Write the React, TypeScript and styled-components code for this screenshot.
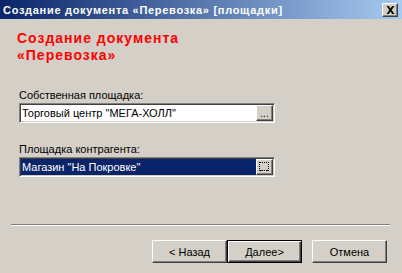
import React from "react";
import styled, { createGlobalStyle, css } from "styled-components";

const GlobalStyle = createGlobalStyle`
  html, body { margin: 0; padding: 0; background: #d4d0c8; }
  body { font-family: Tahoma, "Liberation Sans", Arial, sans-serif; }
`;

const Window = styled.div`
  width: 402px;
  height: 273px;
  background: #d4d0c8;
  display: flex;
  flex-direction: column;
  font-size: 11px;
  color: #000;
  overflow: hidden;
`;

const TitleBar = styled.div`
  height: 19px;
  flex: none;
  display: flex;
  align-items: center;
  justify-content: space-between;
  padding: 0 4px 0 3px;
  background: linear-gradient(to right, #0a246a, #a6caf0);
`;

const TitleText = styled.span`
  color: #fff;
  font-weight: bold;
  font-size: 11px;
  letter-spacing: 0.7px;
  white-space: nowrap;
`;

const raised = css`
  border: 1px solid;
  border-color: #fff #404040 #404040 #fff;
  box-shadow: inset -1px -1px #808080, inset 1px 1px #d4d0c8;
`;

const CloseButton = styled.div`
  ${raised};
  box-sizing: border-box;
  width: 16px;
  height: 14px;
  display: flex;
  align-items: center;
  justify-content: center;
  background: #d4d0c8;
`;

const Body = styled.div`
  flex: 1;
  display: flex;
  flex-direction: column;
  padding: 11px 0 0 19px;
`;

const Heading = styled.h1`
  margin: 0 0 25px -2px;
  color: #ff0000;
  font-size: 14px;
  line-height: 17px;
  letter-spacing: 1px;
  font-weight: bold;
`;

const FieldGroup = styled.div`
  display: flex;
  flex-direction: column;
  margin-bottom: 20px;
`;

const Label = styled.label`
  font-size: 11px;
  line-height: 13px;
  margin-bottom: 1px;
`;

const Field = styled.div`
  box-sizing: border-box;
  width: 256px;
  height: 20px;
  display: flex;
  align-items: stretch;
  border: 1px solid;
  border-color: #808080 #fff #fff #808080;
  box-shadow: inset 1px 1px #404040, inset -1px -1px #d4d0c8;
  padding: 1px;
  background: #fff;
`;

const FieldValue = styled.div<{ $selected?: boolean }>`
  flex: 1;
  display: flex;
  align-items: center;
  padding-left: 1px;
  white-space: nowrap;
  font-size: 11px;
  background: ${(p) => (p.$selected ? "#0a246a" : "#fff")};
  color: ${(p) => (p.$selected ? "#fff" : "#000")};
`;

const EllipsisButton = styled.div<{ $focused?: boolean }>`
  ${raised};
  box-sizing: border-box;
  width: 17px;
  flex: none;
  background: #d4d0c8;
  display: flex;
  align-items: center;
  justify-content: center;
  position: relative;
  font-size: 10px;
  line-height: 1;
  padding-top: 2px;
  ${(p) =>
    p.$focused &&
    css`
      &::after {
        content: "";
        position: absolute;
        inset: 2px 3px 3px 2px;
        border: 1px dotted #000;
      }
    `}
`;

const Footer = styled.div`
  flex: none;
  display: flex;
  flex-direction: column;
  padding: 0 12px 10px 11px;
`;

const Separator = styled.div`
  height: 0;
  border-top: 1px solid #808080;
  border-bottom: 1px solid #fff;
  margin-bottom: 14px;
`;

const ButtonRow = styled.div`
  display: flex;
  justify-content: flex-end;
  padding-right: 3px;
`;

const Button = styled.div<{ $default?: boolean; $gap?: number }>`
  box-sizing: border-box;
  width: 75px;
  height: 23px;
  display: flex;
  align-items: center;
  justify-content: center;
  font-size: 11px;
  margin-left: ${(p) => p.$gap ?? 0}px;
  ${(p) =>
    p.$default
      ? css`
          border: 1px solid #000;
          box-shadow: inset 1px 1px #fff, inset -1px -1px #404040, inset -2px -2px #808080;
        `
      : raised}
`;

const CloseIcon = () => (
  <svg width="9" height="8" viewBox="0 0 9 8">
    <path d="M0.5 0h2.2l1.8 2.3 1.8-2.3h2.2L5.7 4l2.8 4H6.3L4.5 5.7 2.7 8H0.5l2.8-4z" fill="#000" />
  </svg>
);

export default function App() {
  return (
    <>
      <GlobalStyle />
      <Window>
        <TitleBar>
          <TitleText>Создание документа «Перевозка» [площадки]</TitleText>
          <CloseButton>
            <CloseIcon />
          </CloseButton>
        </TitleBar>
        <Body>
          <Heading>
            Создание документа
            <br />
            «Перевозка»
          </Heading>
          <FieldGroup>
            <Label>Собственная площадка:</Label>
            <Field>
              <FieldValue>Торговый центр "МЕГА-ХОЛЛ"</FieldValue>
              <EllipsisButton>...</EllipsisButton>
            </Field>
          </FieldGroup>
          <FieldGroup>
            <Label>Площадка контрагента:</Label>
            <Field>
              <FieldValue $selected>Магазин "На Покровке"</FieldValue>
              <EllipsisButton $focused>...</EllipsisButton>
            </Field>
          </FieldGroup>
        </Body>
        <Footer>
          <Separator />
          <ButtonRow>
            <Button>&lt; Назад</Button>
            <Button $default>Далее&gt;</Button>
            <Button $gap={10}>Отмена</Button>
          </ButtonRow>
        </Footer>
      </Window>
    </>
  );
}
